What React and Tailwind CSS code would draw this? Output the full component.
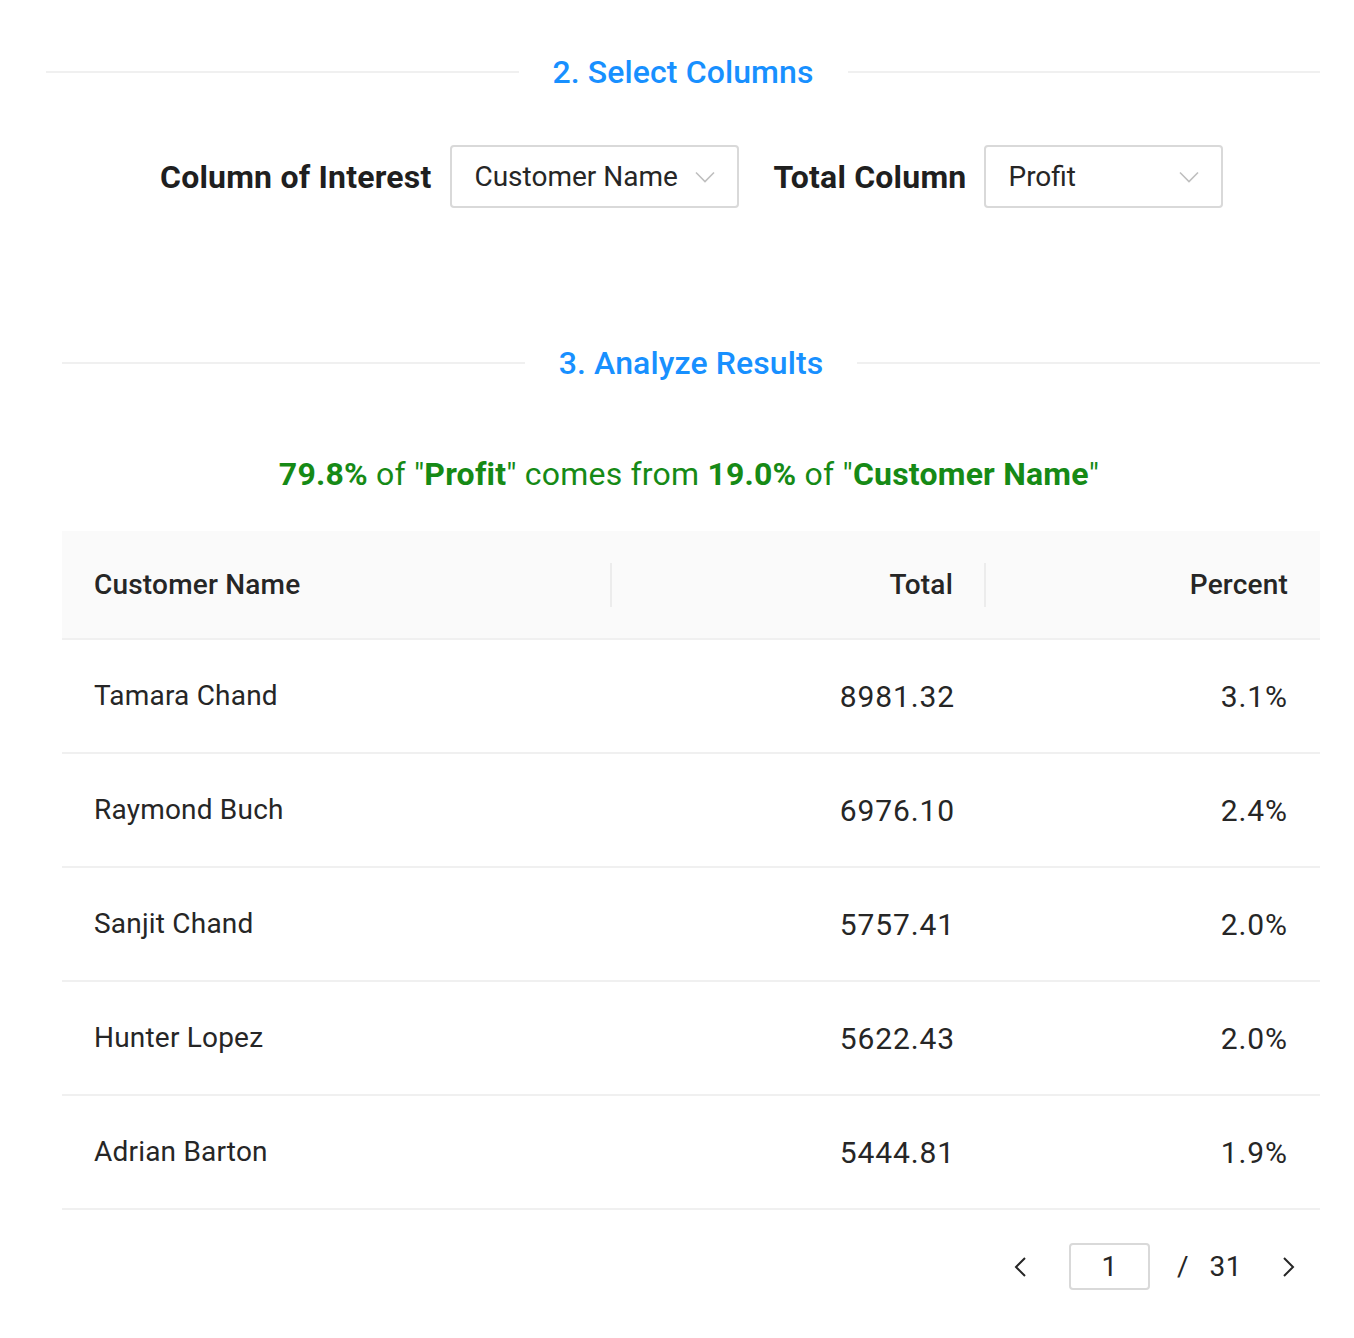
import React from "react";

const font = { fontFamily: "Roboto, 'Liberation Sans', sans-serif" };

function Chevron() {
  return (
    <svg width="20" height="12" viewBox="0 0 20 12" fill="none">
      <path d="M1 1.5 L10 10.5 L19 1.5" stroke="#bfbfbf" strokeWidth="1.6" />
    </svg>
  );
}

function SectionDivider({ title, className }) {
  return (
    <div className={"flex items-center h-[44px] " + className}>
      <div className="flex-1 h-[2px] bg-[#f0f0f0]" />
      <div className="px-[34px] text-[32px] leading-[44px] font-medium text-[#1890ff] tracking-[0.1px]">{title}</div>
      <div className="flex-1 h-[2px] bg-[#f0f0f0]" />
    </div>
  );
}

function Select({ value, width }) {
  return (
    <div className={"flex items-center justify-between h-[63px] border-2 border-[#d9d9d9] rounded-[4px] pl-[22px] pr-[22px] " + width}>
      <span className="text-[28px] text-[#262626]">{value}</span>
      <Chevron />
    </div>
  );
}

const rows = [
  ["Tamara Chand", "8981.32", "3.1%"],
  ["Raymond Buch", "6976.10", "2.4%"],
  ["Sanjit Chand", "5757.41", "2.0%"],
  ["Hunter Lopez", "5622.43", "2.0%"],
  ["Adrian Barton", "5444.81", "1.9%"],
];

export default function App() {
  return (
    <div className="w-[1354px] h-[1338px] bg-white" style={font}>
      <SectionDivider title="2. Select Columns" className="ml-[46px] mr-[34px] mt-[50px]" />

      <div className="flex items-center mt-[51px] pl-[160px]">
        <span className="text-[32px] font-bold text-[#1f1f1f] mr-[19px] tracking-[0.2px]">Column of Interest</span>
        <Select value="Customer Name" width="w-[289px]" />
        <span className="text-[32px] font-bold text-[#1f1f1f] ml-[34px] mr-[18px] tracking-[0.2px]">Total Column</span>
        <Select value="Profit" width="w-[239px]" />
      </div>

      <SectionDivider title="3. Analyze Results" className="ml-[62px] mr-[34px] mt-[133px]" />

      <div className="mt-[67px] h-[44px] leading-[44px] text-center text-[32px] text-[#168a16] pl-[24px] tracking-[0.2px]">
        <b>79.8%</b> of "<b>Profit</b>" comes from <b>19.0%</b> of "<b>Customer Name</b>"
      </div>

      <div className="ml-[62px] mr-[34px] mt-[35px]">
        <div className="flex items-center h-[109px] bg-[#fafafa] border-b-2 border-[#f0f0f0] text-[28px] font-medium text-[#262626] tracking-[0.2px]">
          <div className="w-[548px] pl-[32px]">Customer Name</div>
          <div className="w-[2px] h-[44px] bg-[#ececec]" />
          <div className="w-[372px] pr-[31px] text-right">Total</div>
          <div className="w-[2px] h-[44px] bg-[#ececec]" />
          <div className="flex-1 pr-[32px] text-right">Percent</div>
        </div>
        {rows.map((r) => (
          <div key={r[0]} className="flex items-center h-[114px] border-b-2 border-[#f0f0f0] text-[#262626]">
            <div className="w-[550px] pl-[32px] text-[28px] tracking-[0.2px]">{r[0]}</div>
            <div className="w-[374px] pr-[31px] text-right text-[30px] tracking-[0.9px]">{r[1]}</div>
            <div className="flex-1 pr-[32px] text-right text-[30px] tracking-[0.9px]">{r[2]}</div>
          </div>
        ))}
      </div>

      <div className="flex items-center justify-end mr-[35px] mt-[33px] h-[47px] text-[#262626]">
        <div className="w-[60px] h-[47px] flex items-center justify-center">
          <svg width="16" height="24" viewBox="0 0 16 24" fill="none">
            <path d="M13 3 L4 12 L13 21" stroke="#262626" strokeWidth="2" />
          </svg>
        </div>
        <div className="ml-[19px] w-[81px] h-[47px] border-2 border-[#d9d9d9] rounded-[4px] flex items-center justify-center text-[28px]">1</div>
        <span className="ml-[27px] text-[28px]">/</span>
        <span className="ml-[21px] text-[28px] tracking-[0.5px]">31</span>
        <div className="ml-[17px] w-[60px] h-[47px] flex items-center justify-center">
          <svg width="16" height="24" viewBox="0 0 16 24" fill="none">
            <path d="M3 3 L12 12 L3 21" stroke="#262626" strokeWidth="2" />
          </svg>
        </div>
      </div>
    </div>
  );
}
